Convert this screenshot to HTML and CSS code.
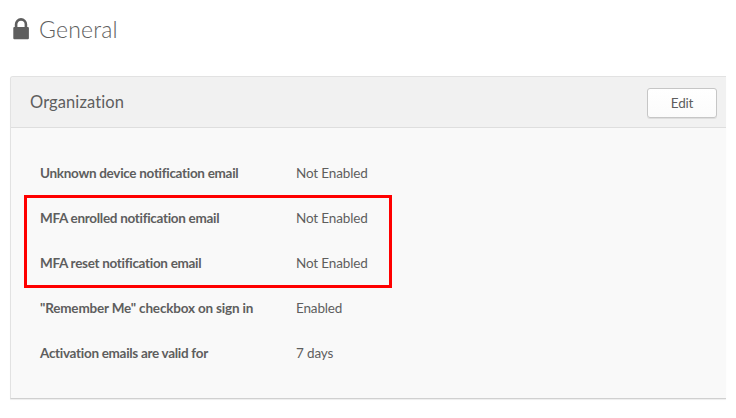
FILE: index.html
```html
<!DOCTYPE html>
<html lang="en">
<head>
<meta charset="utf-8">
<title>General</title>
<link rel="stylesheet" href="styles.css">
</head>
<body>
<header class="page-header">
  <svg class="lock" width="16" height="22" viewBox="0 0 16 22">
    <path d="M3.1 10V6.3a4.9 4.9 0 0 1 9.8 0V10" fill="none" stroke="#5e5e5e" stroke-width="2.6"/>
    <rect x="0.3" y="9" width="15.6" height="12.2" rx="1" fill="#5e5e5e"/>
  </svg>
  <h1>General</h1>
</header>
<section class="panel">
  <div class="panel-header">
    <h2>Organization</h2>
    <button class="edit" type="button">Edit</button>
  </div>
  <dl class="settings">
    <div class="row"><dt>Unknown device notification email</dt><dd>Not Enabled</dd></div>
    <div class="row"><dt>MFA enrolled notification email</dt><dd>Not Enabled</dd></div>
    <div class="row"><dt>MFA reset notification email</dt><dd>Not Enabled</dd></div>
    <div class="row"><dt class="loose">"Remember Me" checkbox on sign in</dt><dd>Enabled</dd></div>
    <div class="row"><dt>Activation emails are valid for</dt><dd>7 days</dd></div>
    <div class="highlight"></div>
  </dl>
</section>
</body>
</html>
```
FILE: styles.css
```css
* { box-sizing: border-box; }
body {
  margin: 0;
  height: 418px;
  overflow: hidden;
  background: #fff;
  color: #5e5e5e;
  font-family: Lato, sans-serif;
  font-variant-ligatures: none;
}
.page-header {
  display: flex;
  align-items: center;
  height: 76px;
  padding: 0 0 18px 13px;
}
.lock { display: block; }
h1 {
  margin: 0 0 0 10px;
  font-size: 23px;
  line-height: 30px;
  font-weight: 300;
  letter-spacing: 0.2px;
}
.panel {
  width: 716px;
  height: 323px;
  border: 1px solid #e2e2e2;
  border-right: 0;
  border-bottom-color: #d0d0d0;
  border-radius: 3px 0 0 0;
  margin-left: 10px;
  background: #f9f9f9;
  box-shadow: 0 1px 1px #eee;
}
.panel-header {
  display: flex;
  justify-content: space-between;
  height: 51px;
  padding: 11px 9px 0 19px;
  background: #f1f1f1;
  border-bottom: 1px solid #dedede;
  border-radius: 2px 0 0 0;
}
h2 {
  margin: 0;
  font-size: 16.5px;
  line-height: 28px;
  font-weight: 400;
  letter-spacing: 0.1px;
}
.edit {
  width: 70px;
  height: 30px;
  padding: 0;
  border: 1px solid #c6c6c6;
  border-radius: 3px;
  background: linear-gradient(#fff, #fbfbfb);
  box-shadow: 0 1px 0 #dedede;
  color: #5e5e5e;
  font: 13.5px/28px Lato, sans-serif;
  letter-spacing: -0.2px;
}
.settings {
  position: relative;
  margin: 0;
  padding: 23px 0 0 29px;
  font-size: 13.5px;
}
.row {
  display: grid;
  grid-template-columns: 256px 1fr;
  height: 45px;
  line-height: 45px;
  white-space: nowrap;
}
dt {
  font-weight: 700;
  letter-spacing: -0.3px;
}
dt.loose { letter-spacing: -0.18px; }
dd {
  margin: 0;
  letter-spacing: -0.15px;
}
.highlight {
  position: absolute;
  left: 13px;
  top: 67px;
  width: 368px;
  height: 93px;
  border: 3px solid #f00;
}
```
